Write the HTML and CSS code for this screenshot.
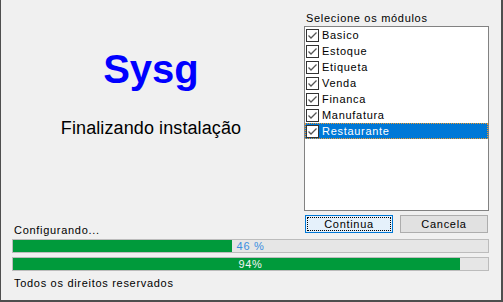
FILE: index.html
```html
<!DOCTYPE html>
<html lang="pt">
<head>
  <meta charset="UTF-8" />
  <title>Sysg - Instalação</title>
  <link rel="stylesheet" href="styles.css">
</head>
<body>
  <svg class="defs" width="0" height="0">
    <symbol id="tick" viewBox="0 0 11 11">
      <polyline points="1.5,5.5 4,8 9.5,2.5" fill="none" stroke="#555" stroke-width="1.3" />
    </symbol>
  </svg>

  <div class="window">
    <!-- logo / titulo -->
    <div class="brand">
      <div class="logo">Sysg</div>
      <div class="subtitle">Finalizando instalação</div>
    </div>

    <!-- modulos -->
    <div class="modules">
      <div class="label">Selecione os módulos</div>
      <ul class="list">
        <li class="item"><span class="check"><svg><use href="#tick"/></svg></span>Basico</li>
        <li class="item"><span class="check"><svg><use href="#tick"/></svg></span>Estoque</li>
        <li class="item"><span class="check"><svg><use href="#tick"/></svg></span>Etiqueta</li>
        <li class="item"><span class="check"><svg><use href="#tick"/></svg></span>Venda</li>
        <li class="item"><span class="check"><svg><use href="#tick"/></svg></span>Financa</li>
        <li class="item"><span class="check"><svg><use href="#tick"/></svg></span>Manufatura</li>
        <li class="item selected"><span class="check"><svg><use href="#tick"/></svg></span>Restaurante</li>
      </ul>
    </div>

    <div class="status">Configurando...</div>
    <div class="buttons">
      <button class="btn default"><span>Continua</span></button>
      <button class="btn">Cancela</button>
    </div>

    <div class="bar">
      <div class="fill" style="width: 46%"></div>
      <span class="pct">46 %</span>
    </div>
    <div class="bar">
      <div class="fill" style="width: 94%"></div>
      <span class="pct on">94%</span>
    </div>

    <div class="footer">Todos os direitos reservados</div>
  </div>
</body>
</html>
```

FILE: styles.css
```css
html, body {
  margin: 0;
  padding: 0;
  background: #f0f0f0;
  overflow: hidden;
}

.defs {
  position: absolute;
}

.window {
  width: 503px;
  height: 302px;
  box-sizing: border-box;
  border-left: 1px solid #4e4e4e;
  border-right: 2px solid #4e4e4e;
  border-bottom: 2px solid #4e4e4e;
  padding: 12px 12px 0 10px;
  display: grid;
  grid-template-columns: 1fr 185px;
  align-content: start;
  font-family: "Liberation Sans", Arial, sans-serif;
  font-size: 11px;
  letter-spacing: 0.7px;
  color: #000;
}

/* logo */
.brand {
  display: flex;
  flex-direction: column;
  align-items: center;
  padding: 34px 13px 0 0;
}

.logo {
  font-size: 40px;
  font-weight: bold;
  line-height: 46px;
  color: #0000ff;
  letter-spacing: 0;
}

.subtitle {
  font-size: 18px;
  line-height: 22px;
  margin-top: 25px;
  letter-spacing: 0.1px;
}

/* lista de modulos */
.modules {
  display: flex;
  flex-direction: column;
}

.label {
  line-height: 13px;
  margin-left: 2px;
  margin-bottom: 1px;
}

.list {
  list-style: none;
  margin: 0;
  padding: 0;
  height: 185px;
  box-sizing: border-box;
  border: 1px solid #828282;
  background: #fff;
}

.item {
  height: 16px;
  line-height: 16px;
  display: flex;
  align-items: center;
  padding-left: 1px;
}

.item.selected {
  background: #0078d7;
  color: #fff;
  outline: 1px dotted #f39a2a;
  outline-offset: -1px;
}

.check {
  width: 13px;
  height: 13px;
  box-sizing: border-box;
  border: 1px solid #333;
  background: #fff;
  margin-right: 3px;
  display: flex;
}

.check svg {
  width: 11px;
  height: 11px;
}

/* status e botoes */
.status {
  align-self: end;
  line-height: 13px;
  margin: 0 0 -4px 3px;
}

.buttons {
  display: flex;
  justify-content: space-between;
  padding: 4px 1px 0 1px;
}

.btn {
  width: 88px;
  height: 18px;
  padding: 0;
  box-sizing: border-box;
  border: 1px solid #adadad;
  background: #e1e1e1;
  font: inherit;
  letter-spacing: inherit;
  color: #000;
  display: flex;
  align-items: center;
  justify-content: center;
}

.btn.default {
  border-color: #0078d7;
  background: #e5f1fb;
  padding: 1px;
}

.btn.default span {
  flex: 1;
  align-self: stretch;
  border: 1px dotted #000;
  line-height: 12px;
}

/* barras de progresso */
.bar {
  grid-column: 1 / 3;
  position: relative;
  height: 14px;
  box-sizing: border-box;
  border: 1px solid #bcbcbc;
  background: #e6e6e6;
  margin-left: 1px;
}

.bar + .bar {
  margin-top: 4px;
}

.buttons + .bar {
  margin-top: 6px;
}

.fill {
  height: 100%;
  background: #009a3b;
}

.pct {
  position: absolute;
  top: 0;
  left: 0;
  right: 0;
  text-align: center;
  line-height: 12px;
  color: #3b8ee0;
}

.pct.on {
  color: #f4f4f4;
}

.footer {
  grid-column: 1 / 3;
  line-height: 13px;
  margin: 6px 0 0 3px;
}
```
